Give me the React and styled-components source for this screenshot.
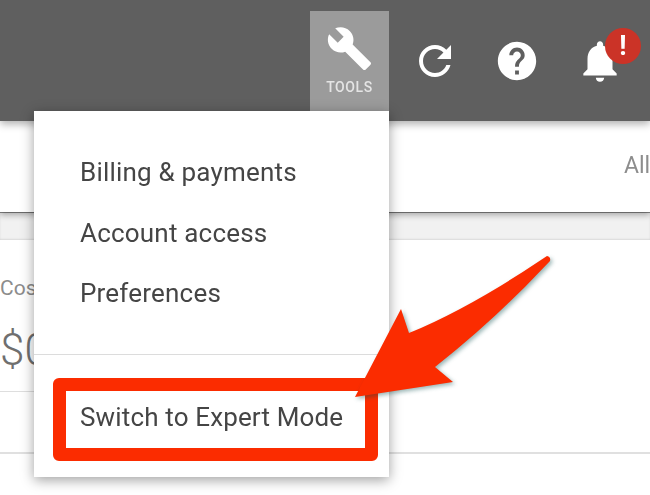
import React from 'react';
import styled, { createGlobalStyle } from 'styled-components';

const GlobalStyle = createGlobalStyle`
  html, body {
    margin: 0;
    padding: 0;
    background: #ffffff;
    overflow: hidden;
  }
  body {
    font-family: Roboto, "Liberation Sans", sans-serif;
  }
`;

const Page = styled.div`
  position: relative;
  width: 650px;
  height: 495px;
  overflow: hidden;
  filter: blur(0.7px);
`;

const Header = styled.header`
  position: relative;
  z-index: 3;
  display: flex;
  justify-content: flex-end;
  align-items: center;
  gap: 35px;
  height: 121px;
  padding-right: 25px;
  box-sizing: border-box;
  background: #5f5f5f;
  box-shadow: 0 3px 8px rgba(0, 0, 0, 0.32);
`;

const ToolsTile = styled.div`
  position: relative;
  display: flex;
  flex-direction: column;
  align-items: center;
  width: 79px;
  height: 100px;
  margin-right: -13px;
  margin-top: 1px;
  padding-top: 14px;
  box-sizing: border-box;
  background: #9b9b9b;
  color: #ffffff;
`;

const ToolsLabel = styled.span`
  margin-top: 7px;
  font-size: 14px;
  font-weight: 500;
  letter-spacing: 0.6px;
  color: #e4e4e4;
`;

const HeaderIcon = styled.svg`
  display: block;
  flex: none;
  width: ${(p) => p.$size}px;
  height: ${(p) => p.$size}px;
  fill: #ffffff;
`;

const BellWrap = styled.div`
  position: relative;
  width: 50px;
  height: 50px;
`;

const Badge = styled.span`
  position: absolute;
  top: -8px;
  left: 30px;
  width: 36px;
  height: 36px;
  border-radius: 50%;
  background: #cb3327;
  color: #ffffff;
  font-size: 27px;
  font-weight: 700;
  line-height: 36px;
  text-align: center;
`;

const SubBar = styled.div`
  position: relative;
  z-index: 2;
  display: flex;
  justify-content: flex-end;
  align-items: center;
  height: 91px;
  background: #ffffff;
  box-shadow: 0 1px 0 rgba(0, 0, 0, 0.42), 0 3px 6px rgba(0, 0, 0, 0.3);
  color: #8d8d8d;
  font-size: 23px;
`;

const AllLabel = styled.span`
  width: 26px;
  overflow: hidden;
  white-space: nowrap;
  margin-top: -3px;
`;

const Strip = styled.div`
  height: 28px;
  background: #f1f1f1;
  box-shadow: inset 0 -1px 2px rgba(0, 0, 0, 0.1);
`;

const Card = styled.section`
  height: 212px;
  background: #ffffff;
  border-bottom: 2px solid #e0e0e0;
`;

const Kpi = styled.div`
  width: 200px;
  height: 152px;
  padding-top: 36px;
  box-sizing: border-box;
  border-bottom: 1px solid #dedede;
`;

const KpiLabel = styled.div`
  font-size: 21px;
  line-height: 24px;
  color: #8c8c8c;
`;

const KpiValue = styled.div`
  margin-top: 24px;
  font-size: 44px;
  line-height: 52px;
  font-weight: 300;
  color: #6f6f6f;
`;

const Menu = styled.nav`
  position: absolute;
  top: 100%;
  right: 0;
  z-index: 4;
  width: 355px;
  height: 366px;
  padding-top: 31px;
  box-sizing: border-box;
  background: #ffffff;
  box-shadow: 0 3px 12px rgba(0, 0, 0, 0.38);
`;

const MenuItem = styled.div`
  height: 60.5px;
  padding-left: 46px;
  font-size: 26px;
  line-height: 60px;
  letter-spacing: 0.2px;
  color: #454545;
  white-space: nowrap;
`;

const Divider = styled.div`
  height: 1px;
  margin-top: 30px;
  background: #dcdcdc;
`;

const Highlight = styled.div`
  display: flex;
  align-items: center;
  width: 325px;
  height: 83px;
  margin: 23px 0 0 19px;
  padding: 0 0 4px 14px;
  box-sizing: border-box;
  border: 13px solid #fb2c00;
  border-radius: 6px;
  font-size: 26px;
  letter-spacing: 0.15px;
  color: #454545;
  white-space: nowrap;
`;

const Arrow = styled.svg`
  position: absolute;
  top: 0;
  left: 0;
  z-index: 5;
  width: 650px;
  height: 495px;
  pointer-events: none;
  filter: drop-shadow(2px 2px 2px rgba(0, 70, 70, 0.4));
`;

const menuLinks = ['Billing & payments', 'Account access', 'Preferences'];

const App = () => {
  return (
    <Page>
      <GlobalStyle />
      <Header>
        <ToolsTile>
          <HeaderIcon $size={47} viewBox="0 0 24 24">
            <path d="M22.7 19l-9.1-9.1c.9-2.3.4-5-1.5-6.9-2-2-5-2.4-7.4-1.3L9 6 6 9 1.6 4.7C.4 7.1.9 10.1 2.9 12.1c1.9 1.9 4.6 2.4 6.9 1.5l9.1 9.1c.4.4 1 .4 1.4 0l2.3-2.3c.5-.4.5-1.1.1-1.4z" />
          </HeaderIcon>
          <ToolsLabel>TOOLS</ToolsLabel>
          <Menu>
            {menuLinks.map((link) => (
              <MenuItem key={link}>{link}</MenuItem>
            ))}
            <Divider />
            <Highlight>Switch to Expert Mode</Highlight>
          </Menu>
        </ToolsTile>
        <HeaderIcon $size={48} viewBox="0 0 24 24">
          <path d="M17.65 6.35C16.2 4.9 14.21 4 12 4c-4.42 0-7.99 3.58-7.99 8s3.57 8 7.99 8c3.73 0 6.84-2.55 7.73-6h-2.08c-.82 2.33-3.04 4-5.65 4-3.31 0-6-2.69-6-6s2.69-6 6-6c1.66 0 3.14.69 4.22 1.78L13 11h7V4l-2.35 2.35z" />
        </HeaderIcon>
        <HeaderIcon $size={46} viewBox="0 0 24 24">
          <path d="M12 2C6.48 2 2 6.48 2 12s4.48 10 10 10 10-4.48 10-10S17.52 2 12 2zm1 17h-2v-2h2v2zm2.07-7.75l-.9.92C13.45 12.9 13 13.5 13 15h-2v-.5c0-1.1.45-2.1 1.17-2.83l1.24-1.26c.37-.36.59-.86.59-1.41 0-1.1-.9-2-2-2s-2 .9-2 2H8c0-2.21 1.79-4 4-4s4 1.79 4 4c0 .88-.36 1.68-.93 2.25z" />
        </HeaderIcon>
        <BellWrap>
          <HeaderIcon $size={50} viewBox="0 0 24 24">
            <path d="M12 22c1.1 0 2-.9 2-2h-4c0 1.1.89 2 2 2zm6-6v-5c0-3.07-1.64-5.64-4.5-6.32V4c0-.83-.67-1.5-1.5-1.5s-1.5.67-1.5 1.5v.68C7.63 5.36 6 7.92 6 11v5l-2 2v1h16v-1l-2-2z" />
          </HeaderIcon>
          <Badge>!</Badge>
        </BellWrap>
      </Header>
      <SubBar>
        <AllLabel>All</AllLabel>
      </SubBar>
      <Strip />
      <Card>
        <Kpi>
          <KpiLabel>Cost</KpiLabel>
          <KpiValue>$0</KpiValue>
        </Kpi>
      </Card>
      <Arrow viewBox="0 0 650 495">
        <path
          d="M547 256 Q551 257 550 261 Q495 320 435 367 L453 382 L355 397 L401 309 L409 333 Q470 308 547 256 Z"
          fill="#fb2c00"
        />
      </Arrow>
    </Page>
  );
};

export default App;
